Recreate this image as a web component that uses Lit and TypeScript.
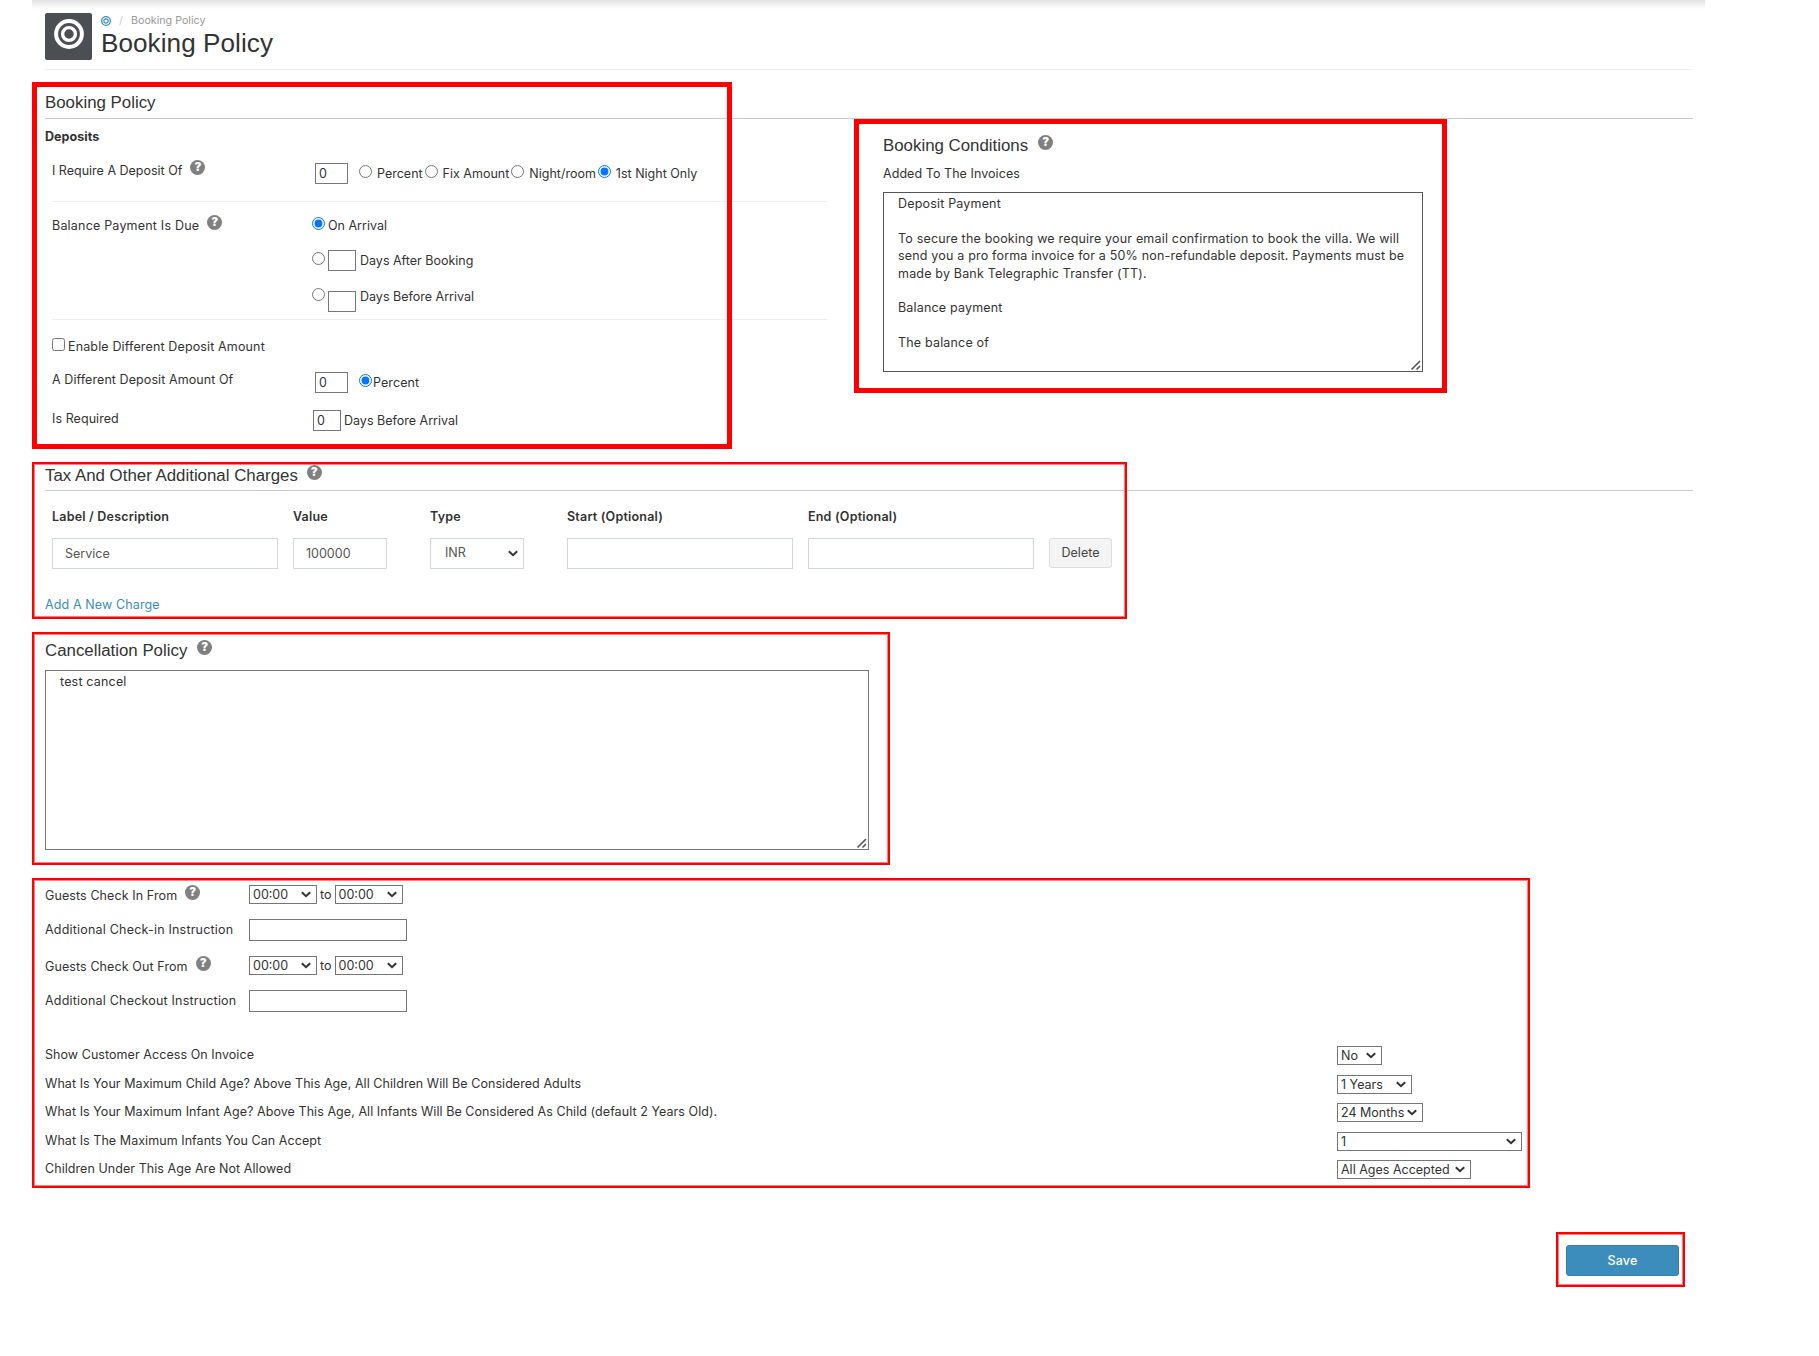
import { LitElement, css, html, svg } from 'lit'
import { customElement } from 'lit/decorators.js'

const depositUnits = ['Percent', 'Fix Amount', 'Night/room', '1st Night Only'];

const chargeColumns = [
  { title: 'Label / Description', kind: 'wide', value: 'Service' },
  { title: 'Value', kind: 'narrow', value: '100000' },
  { title: 'Type', kind: 'select', value: 'INR' },
  { title: 'Start (Optional)', kind: 'wide', value: '' },
  { title: 'End (Optional)', kind: 'wide', value: '' },
];

const guestRules = [
  { label: 'Show Customer Access On Invoice', value: 'No', width: 45 },
  {
    label: 'What Is Your Maximum Child Age? Above This Age, All Children Will Be Considered Adults',
    value: '1 Years',
    width: 75,
  },
  {
    label: 'What Is Your Maximum Infant Age? Above This Age, All Infants Will Be Considered As Child (default 2 Years Old).',
    value: '24 Months',
    width: 86,
  },
  { label: 'What Is The Maximum Infants You Can Accept', value: '1', width: 185 },
  { label: 'Children Under This Age Are Not Allowed', value: 'All Ages Accepted', width: 134 },
];

const conditions = `Deposit Payment

To secure the booking we require your email confirmation to book the villa. We will
send you a pro forma invoice for a 50% non-refundable deposit. Payments must be
made by Bank Telegraphic Transfer (TT).

Balance payment

The balance of`;

const rings = svg`
  <circle cx="15" cy="15" r="12.9" fill="none" stroke="currentColor" stroke-width="4" />
  <circle cx="15" cy="15" r="6.4" fill="none" stroke="currentColor" stroke-width="3.4" />
`;

@customElement('help-icon')
export class HelpIcon extends LitElement {
  static styles = css`
    :host {
      display: flex;
      align-items: center;
      justify-content: center;
      flex: none;
      width: 15px;
      height: 15px;
      border-radius: 50%;
      background: #808080;
      color: #fff;
      font: 900 11.5px/15px Inter, sans-serif;
      letter-spacing: 0;
    }
  `;

  render() {
    return html`?`
  }
};

@customElement('app-root')
export class AppRoot extends LitElement {
  static styles = css`
    :host {
      display: block;
      box-sizing: border-box;
      width: 1819px;
      height: 1356px;
      padding-left: 32px;
      overflow: hidden;
      background: #fff;
      color: #333;
      font-family: Inter, sans-serif;
      font-size: 12.5px;
      line-height: 20px;
      letter-spacing: 0.06px;
    }

    * {
      box-sizing: border-box;
    }

    .page {
      width: 1673px;
      height: 100%;
      padding: 0 12px 0 13px;
      background: linear-gradient(#e2e2e2, #fff) no-repeat 0 0 / 100% 9px;
    }

    .header {
      display: flex;
      height: 70px;
      padding-top: 13px;
      border-bottom: 1px solid #eee;
    }

    .logo {
      display: flex;
      justify-content: center;
      width: 47px;
      height: 47px;
      padding-top: 6px;
      border-radius: 2px;
      background: #4b4f54;
      color: #fff;
    }

    .logo svg {
      width: 30px;
      height: 30px;
    }

    .heading {
      padding-left: 9px;
    }

    .crumbs {
      display: flex;
      align-items: center;
      height: 15px;
      margin-bottom: -1px;
      color: #999;
      font-size: 10.7px;
      letter-spacing: 0;
    }

    .crumbs svg {
      width: 10px;
      height: 10px;
      margin-right: 8px;
      color: #3c8dbc;
    }

    .slash {
      width: 12px;
      color: #ccc;
    }

    h1 {
      margin: 0;
      font: 400 26.1px/32px "Liberation Sans", sans-serif;
    }

    h2 {
      display: flex;
      gap: 9px;
      margin: 0;
      font: 400 16.85px/22px "Liberation Sans", sans-serif;
      letter-spacing: 0;
    }

    .block {
      position: relative;
    }

    /* outlines drawn above the form, without taking part in its layout */
    .frame {
      position: absolute;
      left: -13px;
      border: 2px solid #f00;
      box-shadow: inset 0 0 0 1px #ff8080;
      pointer-events: none;
    }

    .frame.thick {
      top: 12px;
      width: 700px;
      height: 367px;
      border-width: 5px;
      box-shadow: none;
    }

    .frame.tax {
      top: 0;
      width: 1095px;
      height: 157px;
    }

    .frame.cancel {
      top: 0;
      width: 858px;
      height: 233px;
    }

    .frame.guests {
      top: 0;
      width: 1498px;
      height: 310px;
    }

    .policy {
      height: 392px;
      padding-top: 22px;
    }

    .policy h2 {
      height: 27px;
      border-bottom: 1px solid #ccc;
    }

    .columns {
      display: flex;
      align-items: flex-start;
    }

    .deposits {
      width: 782px;
      margin-right: 27px;
      padding-top: 8px;
    }

    .deposits b {
      display: block;
    }

    .row {
      display: flex;
      align-items: flex-start;
      margin-left: 7px;
    }

    .name {
      display: flex;
      gap: 8px;
      flex: none;
      width: 263px;
    }

    .name help-icon {
      margin-top: -1px;
    }

    input,
    select,
    textarea {
      margin: 0;
      border: 1px solid #767676;
      border-radius: 0;
      background: #fff;
      color: #333;
      font: inherit;
    }

    select {
      appearance: none;
      padding: 0 0 0 3px;
      background: #fff url('data:image/svg+xml,<svg xmlns="http://www.w3.org/2000/svg" width="10" height="7"><path d="M.8 1.2 5 5.2 9.2 1.2" fill="none" stroke="%23333" stroke-width="2"/></svg>') no-repeat right 5px center;
      line-height: 17px;
    }

    input[type='radio'],
    input[type='checkbox'] {
      flex: none;
      width: 13px;
      height: 13px;
    }

    .days {
      width: 28px;
      height: 21px;
      padding: 0 3px;
    }

    .amount {
      width: 33px;
      height: 21px;
      padding: 0 3px;
    }

    .deposit-row {
      height: 55px;
      padding-top: 14px;
      border-bottom: 1px solid #eee;
    }

    .deposit-row .name {
      letter-spacing: 0;
    }

    .deposit-row .amount {
      margin: 2px 11px 0 0;
    }

    .unit {
      display: flex;
      align-items: flex-start;
      gap: 5px;
      margin-right: 2px;
      white-space: nowrap;
    }

    .deposit-row .unit {
      padding-top: 3px;
      letter-spacing: 0;
    }

    .unit input {
      margin-top: 1px;
    }

    .balance-row {
      height: 118px;
      padding-top: 14px;
      border-bottom: 1px solid #eee;
    }

    .balance-row .name {
      letter-spacing: 0.2px;
    }

    .options {
      display: flex;
      flex-direction: column;
      margin-left: -3px;
      letter-spacing: 0;
    }

    .option {
      display: flex;
      align-items: flex-start;
      gap: 3px;
      height: 35px;
    }

    .option input[type='radio'] {
      margin-top: 1px;
    }

    .option .days {
      margin: -1px 1px 0 0;
    }

    .option.last {
      height: 30px;
      padding-top: 1px;
    }

    .option.last .days {
      margin-top: 4px;
    }

    .enable {
      gap: 3px;
      padding-top: 17px;
      height: 50px;
      letter-spacing: 0.14px;
    }

    .enable input {
      margin-top: 1px;
    }

    .different {
      height: 39px;
      letter-spacing: 0.08px;
    }

    .different .amount {
      margin: 2px 11px 0 0;
    }

    .different .unit {
      gap: 1px;
      padding-top: 3px;
    }

    .required .days {
      margin: 1px 3px 0 -2px;
    }

    .required span {
      padding-top: 2px;
      letter-spacing: 0;
    }

    .conditions {
      width: 593px;
      height: 274px;
      padding: 11px 19px 0 24px;
      border: 5px solid #f00;
    }

    .conditions h2 {
      gap: 10px;
      height: 29px;
      border: 0;
    }

    .conditions textarea {
      margin-top: 8px;
      width: 540px;
      height: 180px;
      border-color: #555;
    }

    textarea {
      display: block;
      padding: 2px 14px;
      line-height: 17.375px;
      letter-spacing: 0.18px;
      white-space: pre;
      overflow: hidden;
    }

    textarea::-webkit-resizer {
      background: url('data:image/svg+xml,<svg xmlns="http://www.w3.org/2000/svg" width="15" height="15"><path d="M4.5 13.5 13 5M9.5 13.5 13 10" fill="none" stroke="%23555" stroke-width="1.6"/></svg>') no-repeat right bottom;
    }

    .taxes {
      height: 170px;
      padding-top: 3px;
    }

    .taxes h2 {
      height: 26px;
      border-bottom: 1px solid #ccc;
    }

    .charges {
      display: flex;
      align-items: flex-end;
      gap: 15px;
      height: 78px;
      padding-left: 7px;
    }

    .charge {
      display: flex;
      flex-direction: column;
      gap: 11px;
      font-weight: 600;
      letter-spacing: 0.2px;
    }

    .field {
      width: 226px;
      height: 31px;
      padding: 0 12px;
      border: 1px solid #d2d6de;
      color: #555;
      font-weight: 400;
      letter-spacing: 0;
    }

    .narrow .field {
      width: 94px;
      margin-right: 28px;
    }

    .select .field {
      width: 94px;
      margin-right: 28px;
      padding: 0 6px 3px 14px;
    }

    .delete {
      width: 63px;
      height: 30px;
      margin-bottom: 1px;
      padding: 0;
      border: 1px solid #ddd;
      border-radius: 3px;
      background: #f4f4f4;
      color: #444;
      font: inherit;
    }

    .add {
      display: block;
      margin-top: 26px;
      color: #3c8dbc;
      letter-spacing: 0.12px;
      text-decoration: none;
    }

    .cancellation {
      height: 246px;
      padding-top: 8px;
    }

    .cancellation h2 {
      gap: 10px;
      height: 20px;
    }

    .cancellation textarea {
      width: 824px;
      height: 180px;
      margin-top: 10px;
    }

    .rules {
      height: 354px;
      padding-top: 7px;
    }

    .time {
      display: flex;
      align-items: flex-start;
      height: 35px;
    }

    .time.instruction {
      height: 36px;
    }

    .time .name {
      width: 204px;
      padding-top: 1px;
      letter-spacing: 0.1px;
    }

    .instruction .name {
      padding-top: 0;
      letter-spacing: 0.2px;
    }

    .time select {
      width: 68px;
      height: 19px;
    }

    .time .to {
      margin: 0 3px;
    }

    .time .text {
      width: 158px;
      height: 22px;
      margin-top: -1px;
    }

    .rule-list {
      padding-top: 18px;
    }

    .rule {
      display: flex;
      align-items: flex-start;
      height: 28.5px;
    }

    .rule span {
      width: 1292px;
    }

    .rule select {
      height: 19px;
      margin-top: 1px;
    }

    .footer {
      display: flex;
      justify-content: flex-end;
      padding-right: 8px;
    }

    .save-frame {
      width: 129px;
      height: 55px;
      padding: 11px 8px;
      border: 2px solid #f00;
      box-shadow: inset 0 0 0 1px #ff8080;
    }

    .save {
      width: 113px;
      height: 31px;
      padding: 0;
      border: 1px solid #367fa9;
      border-radius: 3px;
      background: #3c8dbc;
      color: #fff;
      font: inherit;
      font-weight: 500;
      letter-spacing: 0.2px;
    }
  `;

  renderTime(label: string) {
    return html`
      <div class="time">
        <div class="name">${label}<help-icon></help-icon></div>
        <select><option>00:00</option></select>
        <span class="to">to</span>
        <select><option>00:00</option></select>
      </div>
    `
  }

  renderInstruction(label: string) {
    return html`
      <div class="time instruction">
        <div class="name">${label}</div>
        <input class="text">
      </div>
    `
  }

  render() {
    return html`
      <div class="page">
        <div class="header">
          <div class="logo"><svg viewBox="0 0 30 30">${rings}</svg></div>
          <div class="heading">
            <div class="crumbs">
              <svg viewBox="0 0 30 30">${rings}</svg>
              <span class="slash">/</span>
              <span>Booking Policy</span>
            </div>
            <h1>Booking Policy</h1>
          </div>
        </div>

        <div class="block policy">
          <h2>Booking Policy</h2>
          <div class="columns">
            <div class="deposits">
              <b>Deposits</b>
              <div class="row deposit-row">
                <div class="name">I Require A Deposit Of<help-icon></help-icon></div>
                <input class="amount" value="0">
                ${depositUnits.map((unit) => html`
                  <label class="unit">
                    <input type="radio" name="unit" ?checked=${unit === '1st Night Only'}>${unit}
                  </label>
                `)}
              </div>
              <div class="row balance-row">
                <div class="name">Balance Payment Is Due<help-icon></help-icon></div>
                <div class="options">
                  <div class="option"><input type="radio" name="due" checked><span>On Arrival</span></div>
                  <div class="option">
                    <input type="radio" name="due"><input class="days"><span>Days After Booking</span>
                  </div>
                  <div class="option last">
                    <input type="radio" name="due"><input class="days"><span>Days Before Arrival</span>
                  </div>
                </div>
              </div>
              <div class="row enable"><input type="checkbox">Enable Different Deposit Amount</div>
              <div class="row different">
                <div class="name">A Different Deposit Amount Of</div>
                <input class="amount" value="0">
                <label class="unit"><input type="radio" checked>Percent</label>
              </div>
              <div class="row required">
                <div class="name">Is Required</div>
                <input class="days" value="0">
                <span>Days Before Arrival</span>
              </div>
            </div>
            <div class="conditions">
              <h2>Booking Conditions<help-icon></help-icon></h2>
              <div>Added To The Invoices</div>
              <textarea .value=${conditions}></textarea>
            </div>
          </div>
          <div class="frame thick"></div>
        </div>

        <div class="block taxes">
          <h2>Tax And Other Additional Charges<help-icon></help-icon></h2>
          <div class="charges">
            ${chargeColumns.map(({ title, kind, value }) => html`
              <div class="charge ${kind}">
                ${title}
                ${kind === 'select'
                  ? html`<select class="field"><option>${value}</option></select>`
                  : html`<input class="field" .value=${value}>`}
              </div>
            `)}
            <button class="delete">Delete</button>
          </div>
          <a class="add" href="#">Add A New Charge</a>
          <div class="frame tax"></div>
        </div>

        <div class="block cancellation">
          <h2>Cancellation Policy<help-icon></help-icon></h2>
          <textarea .value=${'test cancel'}></textarea>
          <div class="frame cancel"></div>
        </div>

        <div class="block rules">
          ${this.renderTime('Guests Check In From')}
          ${this.renderInstruction('Additional Check-in Instruction')}
          ${this.renderTime('Guests Check Out From')}
          ${this.renderInstruction('Additional Checkout Instruction')}
          <div class="rule-list">
            ${guestRules.map(({ label, value, width }) => html`
              <div class="rule">
                <span>${label}</span>
                <select style="width: ${width}px"><option>${value}</option></select>
              </div>
            `)}
          </div>
          <div class="frame guests"></div>
        </div>

        <div class="footer">
          <div class="save-frame"><button class="save">Save</button></div>
        </div>
      </div>
    `
  }
};

declare global {
  interface HTMLElementTagNameMap {
    'help-icon': HelpIcon
    'app-root': AppRoot
  }
};
